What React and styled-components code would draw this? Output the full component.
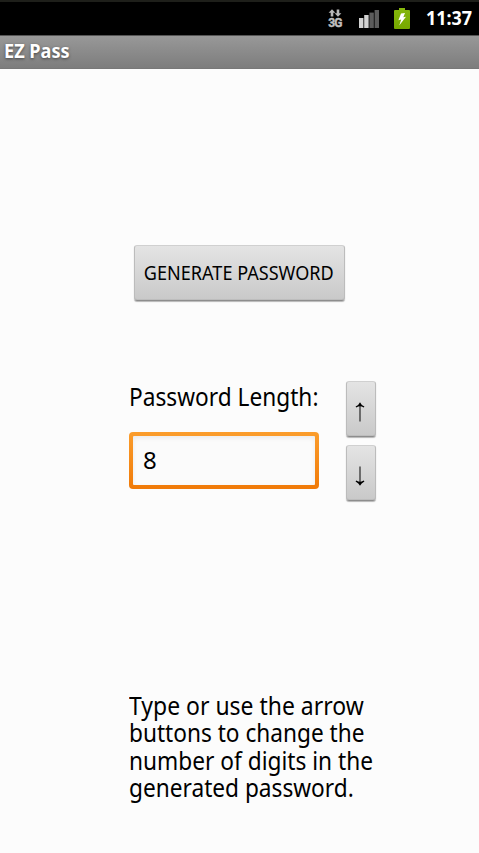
import React, { useState } from "react";
import styled, { createGlobalStyle } from "styled-components";

const GlobalStyle = createGlobalStyle`
  * { box-sizing: border-box; }
  body {
    margin: 0;
    background: #fcfcfc;
    color: #000;
    font-family: "Noto Sans", "Open Sans", sans-serif;
  }
`;

const Screen = styled.div`
  width: 479px;
  height: 853px;
  display: flex;
  flex-direction: column;
  background: #fcfcfc;
  overflow: hidden;
`;

const StatusBar = styled.header`
  flex: none;
  height: 36px;
  border-top: 2px solid #1e1f1a;
  border-bottom: 1px solid #555;
  background: #000;
  display: flex;
  justify-content: flex-end;
  align-items: flex-start;
  padding: 0 7px 0 0;
`;

const StatusIcon = styled.svg`
  flex: none;
  display: block;
  margin: ${(p) => p.$margin};
`;

const Network = styled.div`
  width: 16px;
  margin: 7px 16px 0 0;
  display: flex;
  flex-direction: column;
  align-items: center;
  color: #c0c0c0;
`;

const NetworkType = styled.span`
  font: bold 12px/10px "Roboto", sans-serif;
  letter-spacing: -0.8px;
  -webkit-text-stroke: 0.4px #c0c0c0;
  margin-top: 1px;
`;

const Condensed = styled.span`
  display: block;
  width: max-content;
  white-space: nowrap;
  transform: scaleX(${(p) => p.$ratio});
  transform-origin: ${(p) => p.$origin || "left"} center;
`;

const Clock = styled.div`
  width: 46px;
  height: 31px;
  display: flex;
  justify-content: flex-end;
  color: #fff;
  font-size: 18.7px;
  font-weight: 700;
  line-height: 31px;
`;

const TitleBar = styled.div`
  flex: none;
  height: 33px;
  padding-left: 4px;
  background: linear-gradient(#989898, #7d7d7d);
  border-bottom: 1px solid #787878;
  color: #fff;
  font-size: 18.7px;
  font-weight: 700;
  line-height: 29px;
  text-shadow: 0 1px 3px rgba(0, 0, 0, 0.5);
`;

const Main = styled.main`
  flex: 1;
  display: flex;
  flex-direction: column;
  padding: 176px 0 0 129px;
`;

const PushButton = styled.button`
  flex: none;
  display: flex;
  align-items: center;
  justify-content: center;
  width: ${(p) => p.$width}px;
  height: 56px;
  padding: ${(p) => p.$padding || "0 2px 1px 0"};
  border: 1px solid #bcbcbc;
  border-top-color: #d0d0d0;
  border-bottom-color: #8d8d8d;
  border-radius: 3px;
  background: linear-gradient(#e4e4e4, #c9c9c9);
  box-shadow: 0 1px 1px rgba(0, 0, 0, 0.28), inset 0 -1px 0 #bdbdbd;
  color: #000;
  font-family: inherit;
  font-size: 19.2px;
`;

const GenerateSlot = styled.div`
  padding-left: 5px;
`;

const LengthRow = styled.section`
  display: flex;
  margin-top: 79px;
`;

const LengthField = styled.div`
  width: 190px;
  margin-right: 27px;
`;

const FieldLabel = styled.label`
  display: block;
  height: 52px;
  font-size: 24.5px;
  line-height: 34px;
`;

const Frame = styled.div`
  height: 57px;
  padding: 4px;
  border-radius: 4px;
  background: linear-gradient(#fb9d2c, #f07a08);
`;

const NumberInput = styled.input`
  display: block;
  width: 100%;
  height: 100%;
  padding: 0 0 2px 10px;
  border: 0;
  border-radius: 1px;
  outline: 0;
  background: #fbfbfb;
  box-shadow: inset 0 2px 5px rgba(0, 0, 0, 0.07);
  color: #000;
  font-family: inherit;
  font-size: 24px;
`;

const Stepper = styled.div`
  display: flex;
  flex-direction: column;
  gap: 8px;
  padding-top: 1px;
`;

const Hint = styled.p`
  margin: 191px 0 0;
  font-size: 24.5px;
  line-height: 27.4px;
`;

const hintLines = [
  ["Type or use the arrow", 0.937],
  ["buttons to change the", 0.924],
  ["number of digits in the", 0.926],
  ["generated password.", 0.925],
];

function ArrowIcon({ down }) {
  return (
    <svg width="10" height="20" viewBox="0 0 10 20">
      <g transform={down ? "rotate(180 5 10)" : undefined}>
        <path d="M5 2V19.5" stroke="#333" strokeWidth="1.3" fill="none" />
        <path d="M5 0.2Q6.2 3 9.4 4.6L8.8 5.6Q6.5 4.3 5 4.3Q3.5 4.3 1.2 5.6L0.6 4.6Q3.8 3 5 0.2Z" fill="#000" />
      </g>
    </svg>
  );
}

export default function App() {
  const [length, setLength] = useState(8);
  return (
    <Screen>
      <GlobalStyle />
      <StatusBar>
        <Network>
          <svg width="14" height="8" viewBox="0 0 14 8" fill="#b8b8b8">
            <path d="M4 0.3L7.4 3.8H5.3V7.5H2.7V3.8H0.6Z" />
            <path d="M10 7.7L13.4 4.2H11.3V0.5H8.7V4.2H6.6Z" />
          </svg>
          <NetworkType>3G</NetworkType>
        </Network>
        <StatusIcon $margin="8px 15px 0 0" width="20" height="18" viewBox="0 0 20 18">
          <rect x="0" y="8" width="4.4" height="10" fill="#d2d2d2" />
          <rect x="5.2" y="5" width="4.4" height="13" fill="#d2d2d2" />
          <rect x="10.4" y="2.6" width="4.4" height="15.4" fill="#5c5c5c" />
          <rect x="15.6" y="0" width="4.4" height="18" fill="#5c5c5c" />
        </StatusIcon>
        <StatusIcon $margin="6px 16px 0 0" width="16" height="21" viewBox="0 0 16 21">
          <defs>
            <linearGradient id="charge" x1="0" x2="0" y1="0" y2="1">
              <stop offset="0" stopColor="#86b80c" />
              <stop offset="1" stopColor="#76a800" />
            </linearGradient>
          </defs>
          <path d="M5 0H11V2H15Q16 2 16 3V20Q16 21 15 21H1Q0 21 0 20V3Q0 2 1 2H5Z" fill="url(#charge)" />
          <path d="M7 5.5L11 5L9.3 9.3L12 8.8L5.2 17.5L7.2 11.6L4.4 12.2Z" fill="#fff" />
        </StatusIcon>
        <Clock><Condensed $ratio={0.96} $origin="right">11:37</Condensed></Clock>
      </StatusBar>
      <TitleBar><Condensed $ratio={0.97}>EZ Pass</Condensed></TitleBar>
      <Main>
        <GenerateSlot>
          <PushButton $width={211}>
            <Condensed $ratio={0.942} $origin="center">GENERATE PASSWORD</Condensed>
          </PushButton>
        </GenerateSlot>
        <LengthRow>
          <LengthField>
            <FieldLabel htmlFor="length"><Condensed $ratio={0.926}>Password Length:</Condensed></FieldLabel>
            <Frame>
              <NumberInput id="length" value={length} onChange={(e) => setLength(Number(e.target.value) || 0)} />
            </Frame>
          </LengthField>
          <Stepper>
            <PushButton $width={30} $padding="5px 2px 0 0" aria-label="Increase" onClick={() => setLength(length + 1)}><ArrowIcon /></PushButton>
            <PushButton $width={30} $padding="5px 2px 0 0" aria-label="Decrease" onClick={() => setLength(Math.max(0, length - 1))}><ArrowIcon down /></PushButton>
          </Stepper>
        </LengthRow>
        <Hint>
          {hintLines.map(([text, ratio]) => (
            <Condensed key={text} $ratio={ratio}>{text}</Condensed>
          ))}
        </Hint>
      </Main>
    </Screen>
  );
}
